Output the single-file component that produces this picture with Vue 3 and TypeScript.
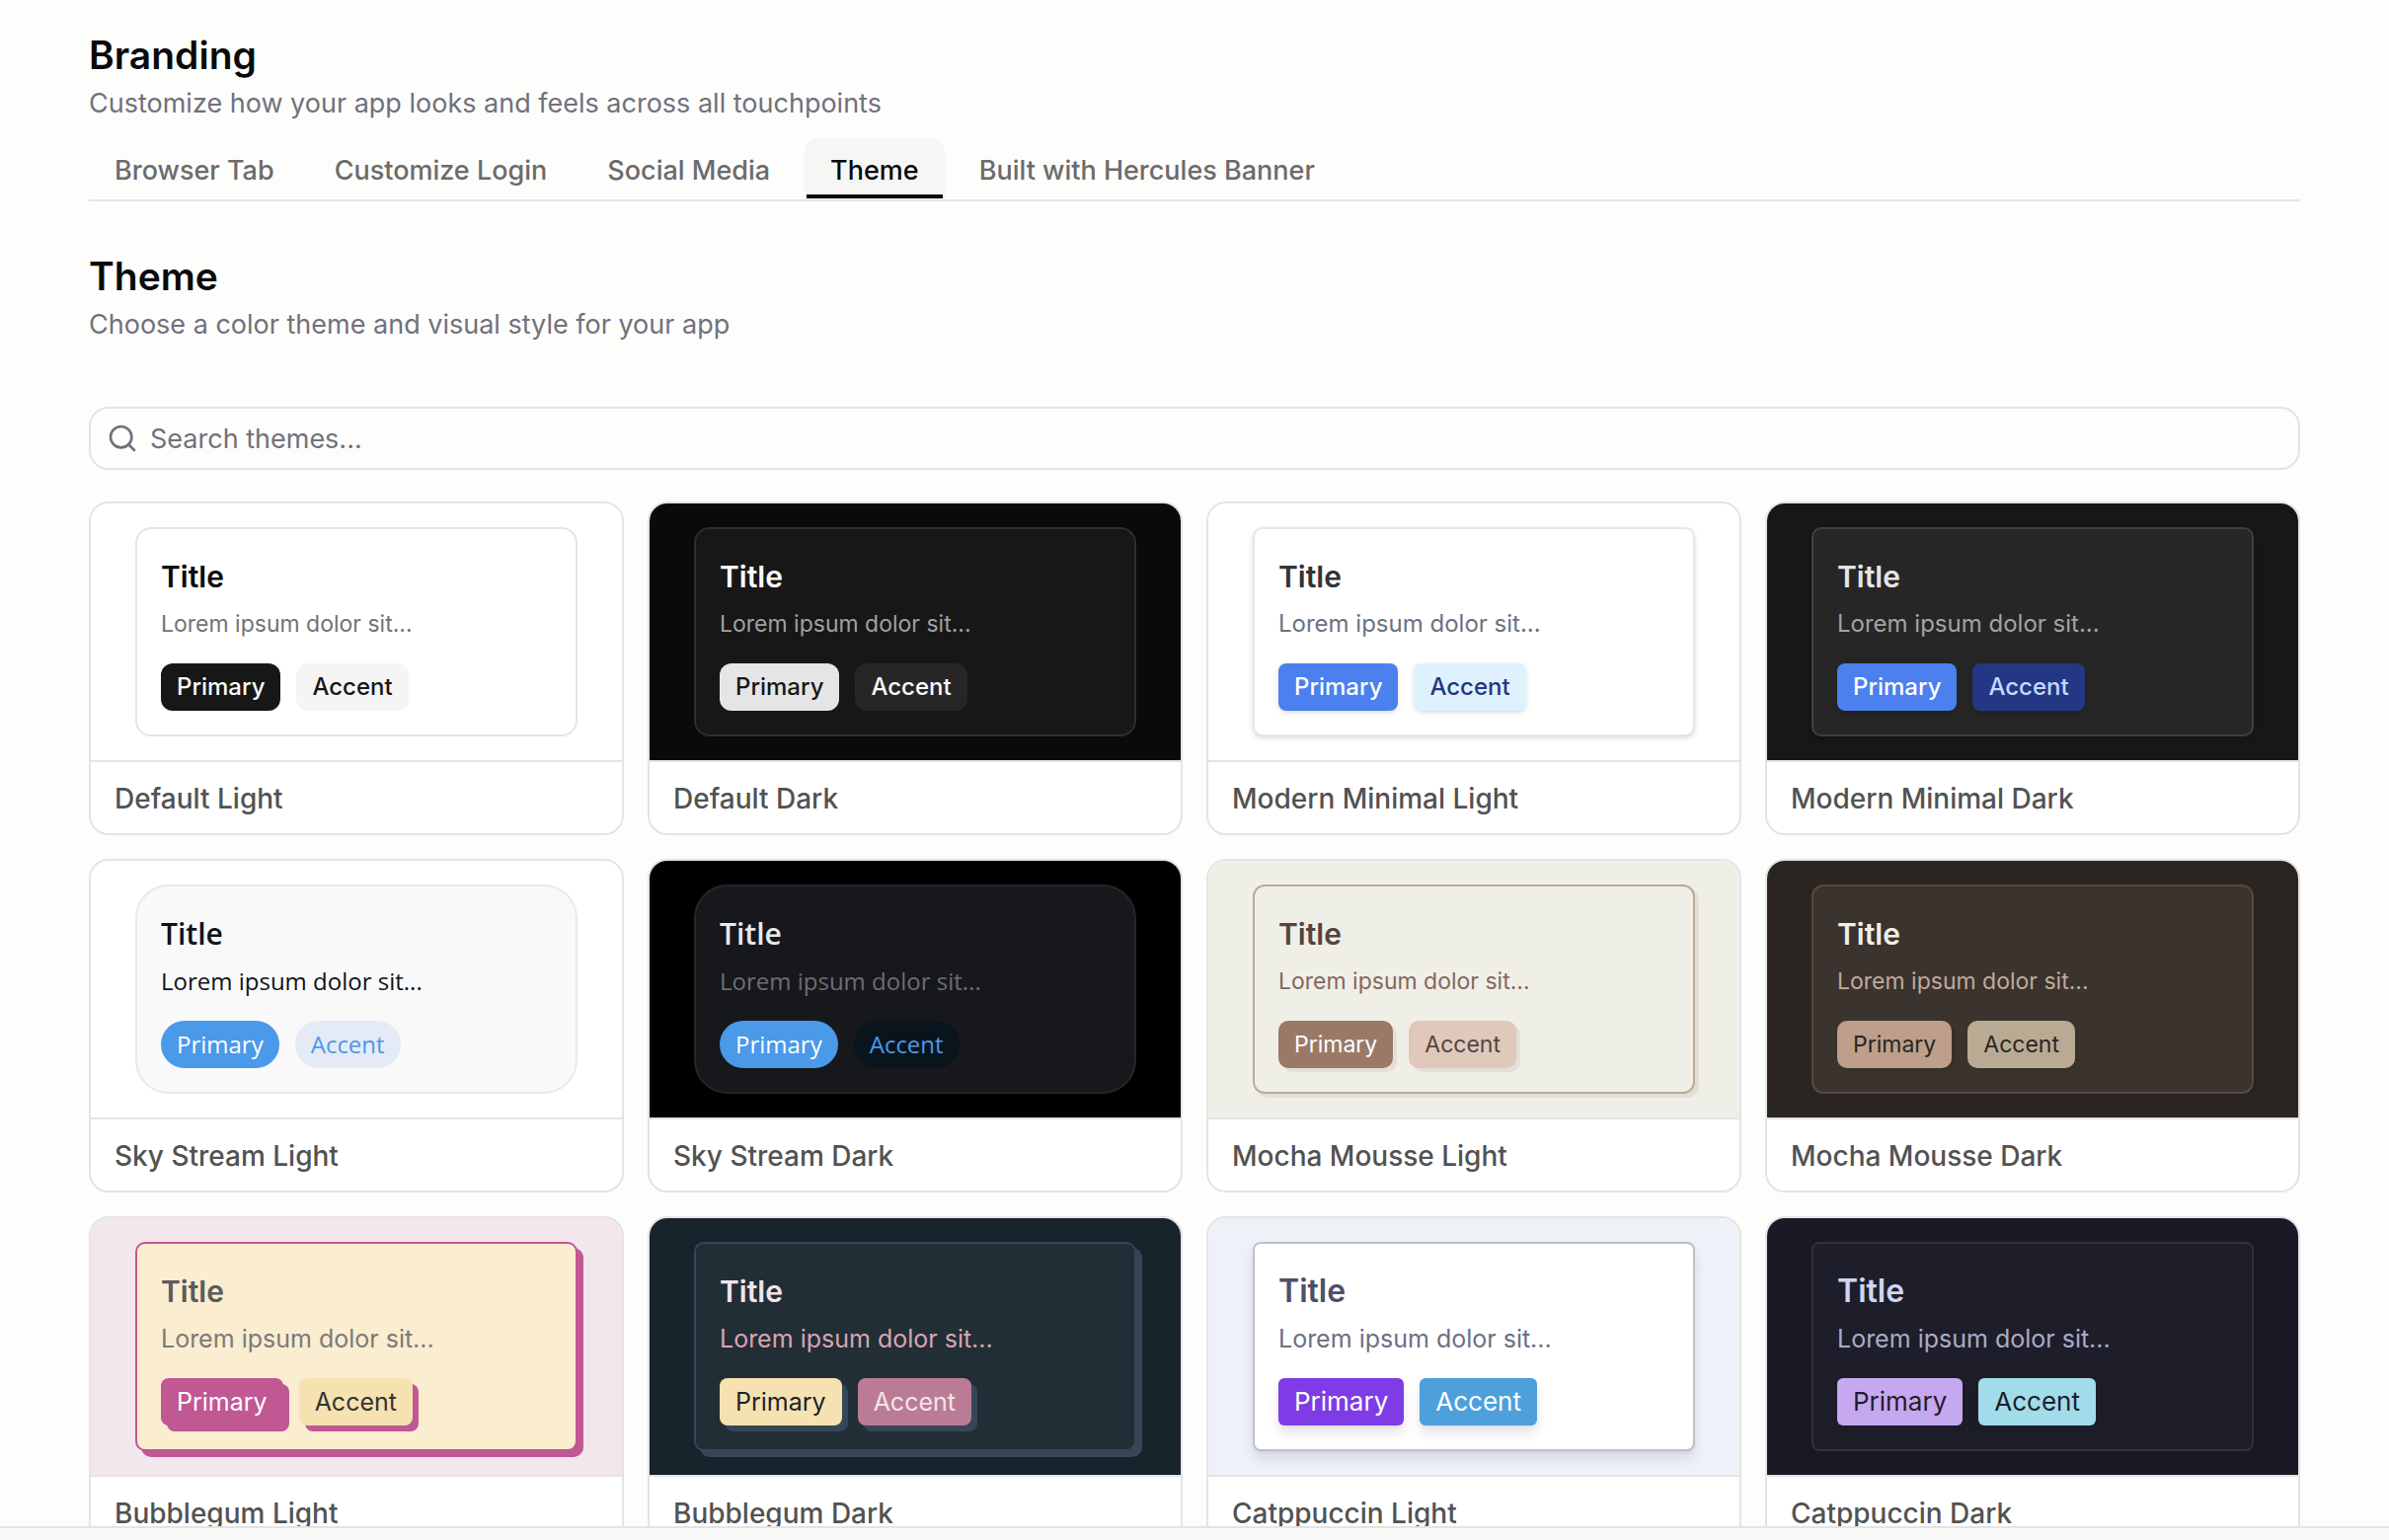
<script setup lang="ts">
import { ref } from 'vue'

interface Theme {
  id: string
  family: string
  name: string
}

const tabs: string[] = [
  'Browser Tab',
  'Customize Login',
  'Social Media',
  'Theme',
  'Built with Hercules Banner',
]
const activeTab = ref('Theme')
const query = ref('')

const themes: Theme[] = [
  { id: 'default-light', family: 'default', name: 'Default Light' },
  { id: 'default-dark', family: 'default', name: 'Default Dark' },
  { id: 'modern-light', family: 'modern', name: 'Modern Minimal Light' },
  { id: 'modern-dark', family: 'modern', name: 'Modern Minimal Dark' },
  { id: 'sky-light', family: 'sky', name: 'Sky Stream Light' },
  { id: 'sky-dark', family: 'sky', name: 'Sky Stream Dark' },
  { id: 'mocha-light', family: 'mocha', name: 'Mocha Mousse Light' },
  { id: 'mocha-dark', family: 'mocha', name: 'Mocha Mousse Dark' },
  { id: 'bubblegum-light', family: 'bubblegum', name: 'Bubblegum Light' },
  { id: 'bubblegum-dark', family: 'bubblegum', name: 'Bubblegum Dark' },
  { id: 'catppuccin-light', family: 'catppuccin', name: 'Catppuccin Light' },
  { id: 'catppuccin-dark', family: 'catppuccin', name: 'Catppuccin Dark' },
]
</script>

<template>
  <div class="app">
    <main class="content">
      <header>
        <h1 class="heading">Branding</h1>
        <p class="subheading">Customize how your app looks and feels across all touchpoints</p>
      </header>

      <nav class="tabs" role="tablist" aria-label="Branding sections">
        <button
          v-for="tab in tabs"
          :key="tab"
          type="button"
          role="tab"
          class="tab"
          :class="{ 'tab--active': tab === activeTab }"
          :aria-selected="tab === activeTab"
          @click="activeTab = tab"
        >
          {{ tab }}
        </button>
      </nav>

      <section class="section">
        <h2 class="heading">Theme</h2>
        <p class="subheading">Choose a color theme and visual style for your app</p>

        <label class="search">
          <svg class="search__icon" viewBox="0 0 24 24" aria-hidden="true">
            <circle cx="11" cy="11" r="8" />
            <path d="m21 21-4.34-4.34" />
          </svg>
          <input
            v-model="query"
            class="search__input"
            type="text"
            placeholder="Search themes..."
            aria-label="Search themes"
          />
        </label>

        <div class="grid">
          <article
            v-for="theme in themes"
            :key="theme.id"
            class="card"
            :class="[`family-${theme.family}`, `theme-${theme.id}`]"
          >
            <div class="preview">
              <div class="sample">
                <h3 class="sample__title">Title</h3>
                <p class="sample__text">Lorem ipsum dolor sit...</p>
                <div class="sample__actions">
                  <button type="button" class="chip chip--primary">Primary</button>
                  <button type="button" class="chip chip--accent">Accent</button>
                </div>
              </div>
            </div>
            <p class="card__name">{{ theme.name }}</p>
          </article>
        </div>
      </section>
    </main>
    <footer class="bottom-bar"></footer>
  </div>
</template>

<style>
body {
  background: #fdfdfc;
}
</style>

<style scoped>
.app {
  display: flex;
  flex-direction: column;
  height: 100vh;
  background: #fdfdfc;
  color: #0a0a0a;
  font-family: Inter, "Liberation Sans", sans-serif;
}

.app *,
.app *::before {
  box-sizing: border-box;
}

.content {
  flex: 1;
  min-height: 0;
  overflow: hidden;
  padding: 28px 90px 0;
}

.heading {
  margin: 0;
  font-size: 39px;
  font-weight: 600;
  line-height: 56px;
}

.subheading {
  margin: 0;
  padding-top: 2px;
  color: #71717b;
  font-size: 27px;
  line-height: 38px;
}

.tabs {
  display: flex;
  gap: 9px;
  margin-top: 16px;
  border-bottom: 2px solid #e4e4e7;
}

.tab {
  height: 62px;
  padding: 0 24px;
  border: 2px solid transparent;
  border-bottom: 0;
  border-radius: 14px 14px 0 0;
  background: transparent;
  color: #6b6b6b;
  font: inherit;
  font-size: 27px;
  font-weight: 500;
  cursor: pointer;
}

.tab--active {
  position: relative;
  background: #f6f6f5;
  color: #0a0a0a;
}

.tab--active::before {
  content: "";
  position: absolute;
  right: 0;
  bottom: 1px;
  left: 0;
  height: 4px;
  background: #0a0a0a;
}

.section {
  margin-top: 48px;
}

.search {
  display: flex;
  align-items: center;
  gap: 12px;
  height: 64px;
  margin: 64px 0 32px;
  padding: 0 16px;
  border: 2px solid #e4e4e7;
  border-radius: 20px;
}

.search__icon {
  flex: none;
  width: 32px;
  height: 32px;
  fill: none;
  stroke: #71717b;
  stroke-linecap: round;
  stroke-linejoin: round;
  stroke-width: 2;
}

.search__input {
  flex: 1;
  min-width: 0;
  padding: 0;
  border: 0;
  outline: 0;
  background: transparent;
  color: #0a0a0a;
  font: inherit;
  font-size: 27px;
}

.search__input::placeholder {
  color: #71717b;
  opacity: 1;
}

.grid {
  display: grid;
  grid-template-columns: repeat(4, minmax(0, 1fr));
  gap: 24px;
}

.card {
  overflow: hidden;
  border: 2px solid #e4e4e7;
  border-radius: 20px;
  background: #fff;
}

.card__name {
  margin: 0;
  padding: 17px 24px 15px;
  border-top: 2px solid #e4e4e7;
  color: #525252;
  font-size: 28px;
  font-weight: 500;
  line-height: 40px;
}

.preview {
  padding: 24px;
  background: var(--page);
}

.sample {
  max-width: 448px;
  margin: 0 auto;
  padding: 24px;
  border: 2px solid var(--line);
  border-radius: var(--radius);
  background: var(--surface);
  box-shadow: var(--shadow, none);
  font-family: var(--font);
}

.sample__title {
  margin: 0 0 8px;
  color: var(--title);
  font-size: var(--title-size);
  font-weight: 600;
  line-height: 48px;
}

.sample__text {
  margin: 0 0 24px;
  color: var(--text);
  font-size: var(--text-size);
  line-height: 32px;
}

.sample__actions {
  display: flex;
  gap: 16px;
}

.chip {
  height: 48px;
  padding: 0 16px;
  border: 0;
  border-radius: var(--chip-radius);
  box-shadow: var(--shadow, none);
  font-family: inherit;
  font-size: var(--chip-size);
  font-weight: var(--chip-weight);
  line-height: 32px;
  cursor: pointer;
}

.chip--primary {
  background: var(--primary);
  color: var(--on-primary);
}

.chip--accent {
  background: var(--accent);
  color: var(--on-accent);
}

.bottom-bar {
  flex: none;
  height: 14px;
  border-top: 2px solid #e4e4e7;
  background: #fafaf9;
}

/* Typeface, corner and shadow settings shared by each light/dark pair */
.family-default {
  --font: Inter, "Liberation Sans", sans-serif;
  --title-size: 30px;
  --text-size: 23px;
  --chip-size: 24px;
  --chip-weight: 500;
  --radius: 16px;
  --chip-radius: 12px;
}

.family-modern {
  --font: Inter, "Liberation Sans", sans-serif;
  --title-size: 30px;
  --text-size: 24px;
  --chip-size: 24px;
  --chip-weight: 500;
  --radius: 10px;
  --chip-radius: 8px;
  --shadow: 0 2px 6px rgb(0 0 0 / 10%), 0 2px 4px -2px rgb(0 0 0 / 10%);
}

.family-sky {
  --font: "Open Sans", "Noto Sans", sans-serif;
  --title-size: 30px;
  --text-size: 24px;
  --chip-size: 24px;
  --chip-weight: 400;
  --radius: 34px;
  --chip-radius: 24px;
}

.family-mocha {
  --font: Inter, "Liberation Sans", sans-serif;
  --title-size: 30px;
  --text-size: 23px;
  --chip-size: 23px;
  --chip-weight: 400;
  --radius: 12px;
  --chip-radius: 10px;
}

.family-bubblegum {
  --font: Inter, "Liberation Sans", sans-serif;
  --title-size: 30px;
  --text-size: 25px;
  --chip-size: 25px;
  --chip-weight: 400;
  --radius: 10px;
  --chip-radius: 8px;
}

.family-catppuccin {
  --font: Inter, "Liberation Sans", sans-serif;
  --title-size: 32px;
  --text-size: 25px;
  --chip-size: 26px;
  --chip-weight: 400;
  --radius: 8px;
  --chip-radius: 6px;
}

.theme-default-light {
  --page: #fff;
  --surface: #fff;
  --line: #e5e5e5;
  --title: #0a0a0a;
  --text: #737373;
  --primary: #171717;
  --on-primary: #fafafa;
  --accent: #f5f5f5;
  --on-accent: #171717;
}

.theme-default-dark {
  --page: #0a0a0a;
  --surface: #171717;
  --line: #2e2e2e;
  --title: #fafafa;
  --text: #a1a1a1;
  --primary: #e5e5e5;
  --on-primary: #171717;
  --accent: #262626;
  --on-accent: #fafafa;
}

.theme-modern-light {
  --page: #fff;
  --surface: #fff;
  --line: #e5e7eb;
  --title: #333;
  --text: #6b7280;
  --primary: #4b80ee;
  --on-primary: #fff;
  --accent: #e0f1fe;
  --on-accent: #243784;
}

.theme-modern-dark {
  --page: #171717;
  --surface: #262626;
  --line: #404040;
  --title: #e5e5e5;
  --text: #a3a3a3;
  --primary: #4b80ee;
  --on-primary: #fff;
  --accent: #243784;
  --on-accent: #c3dafc;
}

.theme-sky-light {
  --page: #fff;
  --surface: #f9f9f9;
  --line: #e4eaee;
  --title: #0f1419;
  --text: #0f1419;
  --primary: #4b99e9;
  --on-primary: #fff;
  --accent: #e4ebf7;
  --on-accent: #4b99e9;
}

.theme-sky-dark {
  --page: #000;
  --surface: #17181c;
  --line: #242628;
  --title: #e7e9ea;
  --text: #6c6e72;
  --primary: #4b99e9;
  --on-primary: #fff;
  --accent: #0a141d;
  --on-accent: #4b99e9;
}

.theme-mocha-light {
  --page: #f0efe7;
  --surface: #f0efe7;
  --line: #b9ab93;
  --title: #54453f;
  --text: #86665b;
  --primary: #9b7967;
  --on-primary: #fff;
  --accent: #e0c8bb;
  --on-accent: #54453f;
  --shadow: 4px 4px 0 #e4dfd7;
}

.theme-mocha-dark {
  --page: #2b2522;
  --surface: #3b332e;
  --line: #57493f;
  --title: #f0efe7;
  --text: #c1aa9b;
  --primary: #bd9f8b;
  --on-primary: #2b2522;
  --accent: #b9ab93;
  --on-accent: #2b2522;
  --shadow: 4px 4px 0 rgb(0 0 0 / 6%);
}

.theme-bubblegum-light {
  --page: #f2e7ed;
  --surface: #fbedcf;
  --line: #c05894;
  --title: #5b5b5b;
  --text: #7a7a7a;
  --primary: #c05894;
  --on-primary: #fff;
  --accent: #f6e2b1;
  --on-accent: #333;
  --shadow: 6px 6px 0 #c05894;
}

.theme-bubblegum-dark {
  --page: #18242c;
  --surface: #222e36;
  --line: #374656;
  --title: #f2e4ea;
  --text: #daa4b1;
  --primary: #f6e2b1;
  --on-primary: #18242c;
  --accent: #ba7c95;
  --on-accent: #f2e4ea;
  --shadow: 6px 6px 0 #374656;
}

.theme-catppuccin-light {
  --page: #eff1f9;
  --surface: #fff;
  --line: #bcc0cc;
  --title: #4d4f68;
  --text: #6c6f84;
  --primary: #7f3be5;
  --on-primary: #fff;
  --accent: #4da0dc;
  --on-accent: #fff;
  --shadow: 0 8px 12px rgb(49 50 85 / 12%), 0 2px 4px -2px rgb(49 50 85 / 12%);
}

.theme-catppuccin-dark {
  --page: #1a1925;
  --surface: #1e1e2a;
  --line: #30303e;
  --title: #cfd6f2;
  --text: #a8adc6;
  --primary: #c6a8f1;
  --on-primary: #1e1e2a;
  --accent: #a0dce9;
  --on-accent: #1e1e2a;
  --shadow: 0 8px 12px rgb(17 17 27 / 15%);
}
</style>
